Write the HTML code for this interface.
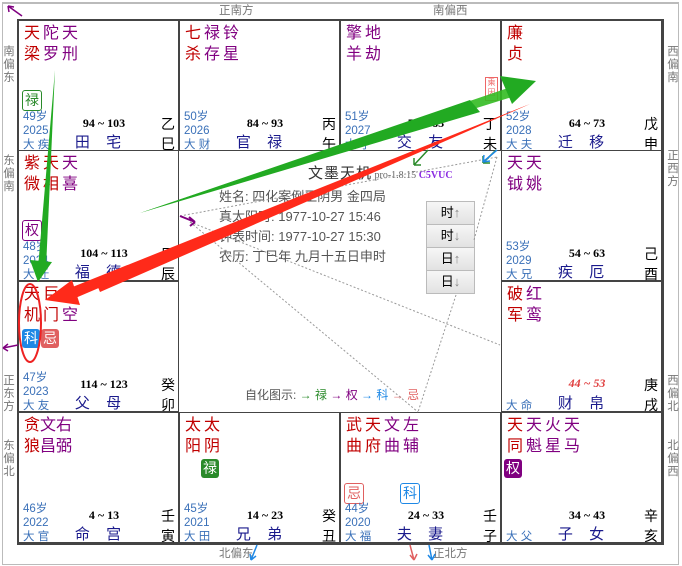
<!DOCTYPE html>
<html><head><meta charset="utf-8"><style>
body{margin:0;width:682px;height:566px;background:#fff;overflow:hidden;font-family:"Liberation Sans","Noto Sans CJK SC",sans-serif;position:relative}
.frame{position:absolute;left:2px;top:2px;width:675px;height:560px;border:1px solid #bbb;border-top:2px solid #bbb}
.grid{position:absolute;left:17px;top:19px;width:643px;height:522px;border:2px solid #444}
.c{position:absolute;width:161px;height:131px;box-sizing:border-box;border:1px solid #444}
.s{position:absolute;left:5px;font-size:16px;line-height:20px;letter-spacing:3px;white-space:nowrap}
.r{color:#c00000}.p{color:#800080}
.age{position:absolute;left:4px;top:89px;font-size:11.5px;line-height:14px;color:#3a70b8}
.rg{position:absolute;left:45px;width:80px;text-align:center;top:95px;font:bold 12px "Liberation Serif",serif;color:#000}
.pn{position:absolute;left:32px;width:100px;text-align:center;top:110px;font-size:15px;color:#1a1a8c;letter-spacing:6px}
.gz{position:absolute;right:3px;top:93px;font-size:14px;line-height:20px;color:#000}
.b{position:absolute;font-size:14px;width:18px;height:19px;line-height:19px;text-align:center;border-radius:3px}
.lbl{position:absolute;font-size:11.5px;color:#777;line-height:13px}
.v{width:12px;text-align:center}
.btn{position:absolute;left:426px;width:47px;height:22px;border:1px solid #bbb;background:linear-gradient(#f6f6f6,#e2e2e2);font-size:13px;text-align:center;line-height:22px;color:#000}
.btn i{font-style:normal;color:#888}
.info{position:absolute;left:219px;font-size:13px;color:#555}
</style></head><body>
<div class="frame"></div>
<div class="lbl" style="left:219px;top:5px">正南方</div>
<div class="lbl" style="left:433px;top:5px">南偏西</div>
<div class="lbl" style="left:219px;top:548px">北偏东</div>
<div class="lbl" style="left:433px;top:548px">正北方</div>
<div class="lbl v" style="left:3px;top:46px">南偏东</div>
<div class="lbl v" style="left:3px;top:155px">东偏南</div>
<div class="lbl v" style="left:3px;top:375px">正东方</div>
<div class="lbl v" style="left:3px;top:440px">东偏北</div>
<div class="lbl v" style="left:667px;top:46px">西偏南</div>
<div class="lbl v" style="left:667px;top:150px">正西方</div>
<div class="lbl v" style="left:667px;top:375px">西偏北</div>
<div class="lbl v" style="left:667px;top:440px">北偏西</div>
<div class="grid"></div>

<!-- row 0 -->
<div class="c" style="left:18px;top:20px">
<div class="s" style="top:3px"><span class="r">天</span><span class="p">陀天</span></div>
<div class="s" style="top:24px"><span class="r">梁</span><span class="p">罗刑</span></div>
<div class="b" style="left:3px;top:69px;border:1px solid #2a8a2a;color:#2a8a2a">禄</div>
<div class="age">49岁<br>2025<br>大 疾</div><div class="rg">94 ~ 103</div><div class="pn">田 宅</div><div class="gz">乙<br>巳</div></div>
<div class="c" style="left:179px;top:20px">
<div class="s" style="top:3px"><span class="r">七</span><span class="p">禄铃</span></div>
<div class="s" style="top:24px"><span class="r">杀</span><span class="p">存星</span></div>
<div class="age">50岁<br>2026<br>大 财</div><div class="rg">84 ~ 93</div><div class="pn">官 禄</div><div class="gz">丙<br>午</div></div>
<div class="c" style="left:340px;top:20px">
<div class="s p" style="top:3px">擎地</div><div class="s p" style="top:24px">羊劫</div>
<div style="position:absolute;left:144px;top:56px;width:11px;height:22px;border:1px solid #e66;color:#e66;font-size:8px;line-height:10px;text-align:center">乘因</div>
<div class="age">51岁<br>2027<br>大 子</div><div class="rg">74 ~ 83</div><div class="pn">交 友</div><div class="gz">丁<br>未</div></div>
<div class="c" style="left:501px;top:20px">
<div class="s r" style="top:3px">廉</div><div class="s r" style="top:24px">贞</div>
<div class="age">52岁<br>2028<br>大 夫</div><div class="rg">64 ~ 73</div><div class="pn">迁 移</div><div class="gz">戊<br>申</div></div>
<!-- row 1 -->
<div class="c" style="left:18px;top:150px">
<div class="s" style="top:3px"><span class="r">紫天</span><span class="p">天</span></div>
<div class="s" style="top:24px"><span class="r">微相</span><span class="p">喜</span></div>
<div class="b" style="left:3px;top:69px;border:1px solid #800080;color:#800080">权</div>
<div class="age">48岁<br>2024<br>大 迁</div><div class="rg">104 ~ 113</div><div class="pn">福 德</div><div class="gz">甲<br>辰</div></div>
<div class="c" style="left:501px;top:150px">
<div class="s p" style="top:3px">天天</div><div class="s p" style="top:24px">钺姚</div>
<div class="age">53岁<br>2029<br>大 兄</div><div class="rg">54 ~ 63</div><div class="pn">疾 厄</div><div class="gz">己<br>酉</div></div>
<!-- row 2 -->
<div class="c" style="left:18px;top:281px">
<div class="s" style="top:3px"><span class="r">天巨</span><span class="p">地</span></div>
<div class="s" style="top:24px"><span class="r">机门</span><span class="p">空</span></div>
<div class="b" style="left:3px;top:47px;background:#1e88e5;color:#fff">科</div>
<div class="b" style="left:22px;top:47px;background:#e06060;color:#fff">忌</div>
<div class="age">47岁<br>2023<br>大 友</div><div class="rg">114 ~ 123</div><div class="pn">父 母</div><div class="gz">癸<br>卯</div></div>
<div class="c" style="left:501px;top:281px">
<div class="s" style="top:3px"><span class="r">破</span><span class="p">红</span></div>
<div class="s" style="top:24px"><span class="r">军</span><span class="p">鸾</span></div>
<div class="rg" style="color:#e04040;font-style:italic;top:94px">44 ~ 53</div>
<div class="age" style="top:117px">大 命</div><div class="pn">财 帛</div><div class="gz">庚<br>戌</div></div>
<!-- row 3 -->
<div class="c" style="left:18px;top:412px">
<div class="s" style="top:3px;letter-spacing:0"><span class="r">贪</span><span class="p">文右</span></div>
<div class="s" style="top:24px;letter-spacing:0"><span class="r">狼</span><span class="p">昌弼</span></div>
<div class="age">46岁<br>2022<br>大 官</div><div class="rg">4 ~ 13</div><div class="pn">命 宫</div><div class="gz">壬<br>寅</div></div>
<div class="c" style="left:179px;top:412px">
<div class="s r" style="top:3px">太太</div><div class="s r" style="top:24px">阳阴</div>
<div class="b" style="left:21px;top:46px;background:#2a8a2a;color:#fff">禄</div>
<div class="age">45岁<br>2021<br>大 田</div><div class="rg">14 ~ 23</div><div class="pn">兄 弟</div><div class="gz">癸<br>丑</div></div>
<div class="c" style="left:340px;top:412px">
<div class="s" style="top:3px"><span class="r">武天</span><span class="p">文左</span></div>
<div class="s" style="top:24px"><span class="r">曲府</span><span class="p">曲辅</span></div>
<div class="b" style="left:3px;top:70px;border:1px solid #e06060;color:#e06060">忌</div>
<div class="b" style="left:59px;top:70px;border:1px solid #1e88e5;color:#1e88e5">科</div>
<div class="age">44岁<br>2020<br>大 福</div><div class="rg">24 ~ 33</div><div class="pn">夫 妻</div><div class="gz">壬<br>子</div></div>
<div class="c" style="left:501px;top:412px">
<div class="s" style="top:3px"><span class="r">天</span><span class="p">天火天</span></div>
<div class="s" style="top:24px"><span class="r">同</span><span class="p">魁星马</span></div>
<div class="b" style="left:2px;top:46px;background:#800080;color:#fff">权</div>
<div class="age" style="top:117px">大 父</div><div class="rg">34 ~ 43</div><div class="pn">子 女</div><div class="gz">辛<br>亥</div></div>

<!-- center -->
<div style="position:absolute;left:308px;top:162px;font-size:15px;color:#333;letter-spacing:1px">文墨天机<span style="font:10px 'Liberation Serif',serif;color:#666;letter-spacing:0"> pro-1.8.15 </span><span style="font:bold 10px 'Liberation Serif',serif;color:#8a2be2;letter-spacing:0"> C5VUC</span></div>
<div class="info" style="top:186px">姓名: 四化案例王阴男 金四局</div>
<div class="info" style="top:206px">真太阳时: 1977-10-27 15:46</div>
<div class="info" style="top:226px">钟表时间: 1977-10-27 15:30</div>
<div class="info" style="top:246px">农历: 丁巳年 九月十五日申时</div>
<div class="btn" style="top:201px">时<i>↑</i></div>
<div class="btn" style="top:224px">时<i>↓</i></div>
<div class="btn" style="top:247px">日<i>↑</i></div>
<div class="btn" style="top:270px">日<i>↓</i></div>
<div style="position:absolute;left:245px;top:386px;font-size:12px;color:#555">自化图示: <span style="color:#2a8a2a">→ 禄</span> <span style="color:#800080">→ 权</span> <span style="color:#1e88e5">→ 科</span> <span style="color:#e06060">→ 忌</span></div>

<svg width="682" height="566" style="position:absolute;left:0;top:0" viewBox="0 0 682 566">
<g stroke="#999" stroke-dasharray="2,2" fill="none" stroke-width="1">
<line x1="180" y1="216" x2="497" y2="157"/><line x1="190" y1="222" x2="500" y2="345"/><line x1="190" y1="222" x2="418" y2="412"/><line x1="497" y1="157" x2="474" y2="240"/><line x1="456" y1="295" x2="418" y2="412"/>
</g>
<polygon points="140,213 508,88 512,97" fill="#33bb22" opacity="0.9"/>
<polygon points="140,213 470,100 480,112" fill="#22aa22"/>
<polygon points="536,81 500,76 512,104" fill="#22aa22"/>
<polygon points="55,70 38,268 46,268" fill="#22aa22"/>
<polygon points="38,282 30,260 52,262" fill="#22aa22"/>
<polygon points="530,104 60,292 66,302" fill="#ff2a1a"/>
<polygon points="530,104 95,280 100,292" fill="#ff2a1a"/>
<polygon points="45,300 72,280 80,305" fill="#ff2a1a"/>
<ellipse cx="30" cy="323" rx="11" ry="39" fill="none" stroke="#ee2222" stroke-width="2"/>
<g stroke-width="1.5" fill="none">
<path d="M22 16 L8 6 M8 6 L9 12 M8 6 L14 7" stroke="#800080"/>
<path d="M180 216 L195 222 M195 222 L189 217 M195 222 L190 226" stroke="#800080" stroke-width="2"/>
<path d="M18 345 L3 348 M3 348 L8 344 M3 348 L8 351" stroke="#800080"/>
<path d="M428 150 L414 165 M414 165 L414 158 M414 165 L421 165" stroke="#2a8a2a"/>
<path d="M496 150 L483 163 M483 163 L483 156 M483 163 L490 163" stroke="#2a8a2a"/>
<path d="M497 150 L483 162 M483 162 L484 155 M483 162 L490 161" stroke="#1e88e5"/>
<path d="M410 545 L414 560 M414 560 L410 555 M414 560 L417 554" stroke="#e06060"/>
<path d="M429 545 L432 560 M432 560 L428 555 M432 560 L435 554" stroke="#1e88e5"/>
<path d="M257 545 L251 560 M251 560 L250 554 M251 560 L256 556" stroke="#1e88e5"/>
</g>
</svg>
</body></html>
